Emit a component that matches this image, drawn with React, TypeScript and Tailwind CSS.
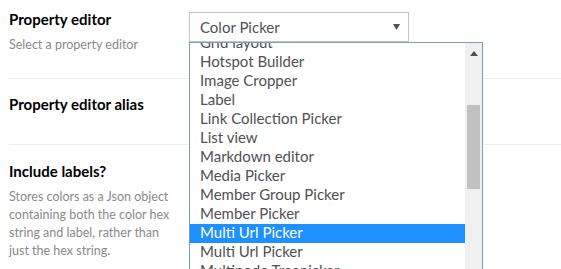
const items = [
  "Grid layout",
  "Hotspot Builder",
  "Image Cropper",
  "Label",
  "Link Collection Picker",
  "List view",
  "Markdown editor",
  "Media Picker",
  "Member Group Picker",
  "Member Picker",
  "Multi Url Picker",
  "Multi Url Picker",
  "Multinode Treepicker",
];

const selectedIndex = 10;

function ListBox() {
  return (
    <div className="absolute left-[189px] top-[42px] w-[294px] h-[240px] border border-[#7f9db9] bg-white flex overflow-hidden">
      <ul className="flex-1 -mt-[9px]">
        {items.map((item, i) => (
          <li
            key={i}
            className={
              i === selectedIndex
                ? "h-[19px] leading-[17px] pl-[10px] text-[15px] bg-[#1e90ff] text-white"
                : "h-[19px] leading-[17px] pl-[10px] text-[15px] text-[#515054]"
            }
          >
            {item}
          </li>
        ))}
      </ul>
      <div className="w-[17px] bg-[#f0f0f0] flex flex-col items-center">
        <svg width="8" height="5" viewBox="0 0 8 5" className="mt-[8px]">
          <path d="M0 5 L4 0 L8 5 Z" fill="#505050" />
        </svg>
        <div className="mt-[49px] w-[13px] h-[84px] bg-[#c1c1c1]" />
      </div>
    </div>
  );
}

export default function App() {
  return (
    <div
      className="relative w-[561px] h-[269px] overflow-hidden bg-white"
      style={{ fontFamily: "Lato, 'Open Sans', sans-serif" }}
    >
      <div className="pl-[9px]">
        <div className="h-[79px] border-b border-[#eeeeee] flex">
          <div className="w-[180px] pt-[9px]">
            <h3 className="text-[15px] font-bold leading-[20px] text-black">Property editor</h3>
            <p className="mt-[8px] text-[12.5px] leading-[16px] text-[#8a8a8a]">Select a property editor</p>
          </div>
          <div className="pt-[12px]">
            <div className="w-[220px] h-[30px] border border-[#c4c4c4] flex items-center justify-between pl-[10px] pr-[8px]">
              <span className="text-[15px] text-[#515054]">Color Picker</span>
              <svg width="7" height="6" viewBox="0 0 7 6">
                <path d="M0 0 L7 0 L3.5 6 Z" fill="#505050" />
              </svg>
            </div>
          </div>
        </div>
        <div className="h-[66px] border-b border-[#eeeeee] pt-[15px]">
          <h3 className="text-[15px] font-bold leading-[20px] text-black">Property editor alias</h3>
        </div>
        <div className="pt-[16px] w-[170px]">
          <h3 className="text-[15px] font-bold leading-[20px] text-black">Include labels?</h3>
          <p className="mt-[7px] text-[12.5px] leading-[18px] text-[#8a8a8a]">
            Stores colors as a Json object containing both the color hex string and label, rather than just the hex string.
          </p>
        </div>
      </div>
      <ListBox />
    </div>
  );
}
